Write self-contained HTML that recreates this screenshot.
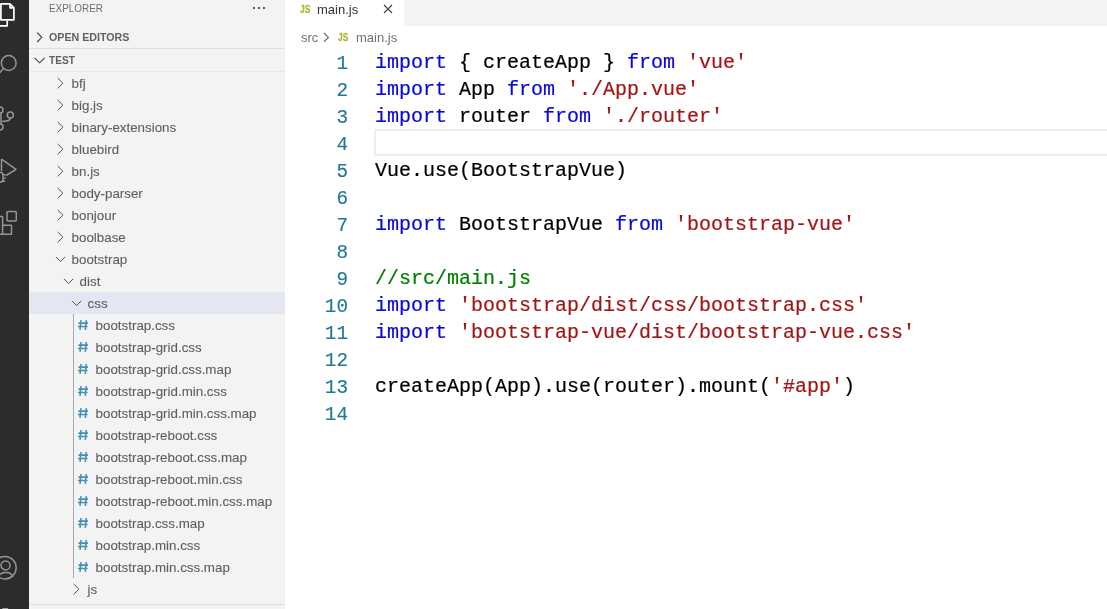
<!DOCTYPE html>
<html><head><meta charset="utf-8">
<style>
*{margin:0;padding:0;box-sizing:border-box}
html,body{width:1107px;height:609px;overflow:hidden;background:#fff;font-family:"Liberation Sans",sans-serif;-webkit-font-smoothing:antialiased}
#act{position:absolute;left:0;top:0;width:29px;height:609px;background:#2c2c2c;overflow:hidden}
#side{will-change:transform;position:absolute;left:29px;top:0;width:256px;height:609px;background:#f3f3f3;overflow:hidden;color:#616161;font-size:13px}
#editor{will-change:transform;position:absolute;left:285px;top:0;width:822px;height:609px;background:#fff;overflow:hidden}
.hdr{position:absolute;left:20px;top:0;height:17px;font-size:11px;line-height:17px;color:#6f6f6f}
.dots{position:absolute;left:224px;top:7px}
.dots i{position:absolute;top:0;width:2px;height:2px;background:#5c5c5c}
.sec{position:absolute;left:0;width:256px;height:22px;font-size:11px;font-weight:bold;line-height:22px;color:#616161}
.sec span{position:absolute;left:20px}
.row{position:absolute;left:0;width:256px;height:22px;line-height:22px;font-size:13.35px;color:#616161;white-space:nowrap}
.row.sel{background:#e4e6f1}
.row .t{position:absolute;top:1px;-webkit-text-stroke:0.1px #5d5d64;color:#5d5d64}
svg.ch{position:absolute}
.hash{position:absolute;top:0;color:#519aba;font-weight:bold;font-size:13px}
#tabs{position:absolute;left:0;top:0;width:822px;height:26px;background:#f3f3f3}
#tab{position:absolute;left:0;top:0;width:119px;height:26px;background:#fff}
#code{position:absolute;left:0;top:49px;font-family:"Liberation Mono",monospace;font-size:20px}
.ln{position:absolute;left:0;width:63px;text-align:right;height:27px;line-height:27px;color:#237893;-webkit-text-stroke:0.15px;font-size:21px;transform:scaleX(0.92);transform-origin:right center;margin-top:0.5px}
.cl{position:absolute;left:90px;height:27px;line-height:27px;white-space:pre;color:#000;-webkit-text-stroke:0.2px}
.k{color:#0808d8}.s{color:#a31515}.c{color:#008000}
#cur{position:absolute;left:89px;top:80px;width:740px;height:27px;border:2px solid #eeeeee;border-right:none}
</style></head><body>
<div id="act"><svg width="29" height="609" style="position:absolute;left:0;top:0" fill="none" stroke-linejoin="round">
  <g stroke="#ffffff" stroke-width="1.7">
    <path d="M0.9 3.9H10L13.9 7.8V19.8H0.9Z"/>
    <path d="M10 3.9V7.8H13.9"/>
    <path d="M7.2 20.7V25.8H-6"/>
  </g>
  <g stroke="#959595" stroke-width="1.5">
    <circle cx="8.7" cy="63" r="7.4"/>
    <path d="M3.5 68.5L-2 74.5"/>
    <circle cx="10.3" cy="115" r="3"/>
    <circle cx="0" cy="110" r="3"/>
    <circle cx="0" cy="127" r="3"/>
    <path d="M1 113V124"/>
    <path d="M10.3 118C10.3 121 7 121 2 121.5"/>
    <path d="M1.5 159.2L16 169.3L6 175.5"/>
    <path d="M1.5 159.2V171"/>
    <rect x="-3" y="172.3" width="6" height="10" rx="3"/>
    <path d="M3 174.8H5.5M3.3 178H5.7M3 181.2H5.2"/>
    <rect x="7" y="211.6" width="9.3" height="9.3" rx="1"/>
    <path d="M-6 216.6H2.6V234.3H-6"/>
    <path d="M2.6 225.3H11.5V234.3H2.6"/>
    <circle cx="5" cy="567.7" r="11.2"/>
    <circle cx="5.5" cy="565.4" r="4.5"/>
    <path d="M-3 578.5C-1 571.5 10.5 570 13 577"/>
  </g>
  <rect x="2.3" y="608" width="5.8" height="1" fill="#a0a0a0"/>
</svg></div>
<div id="side">
  <div class="hdr" style="transform:scaleX(0.9);transform-origin:0 0">EXPLORER</div>
  <div class="sec" style="top:26px"><svg class="ch" style="left:2px;top:3px" width="16" height="16" viewBox="0 0 16 16"><path d="M6.2 3.6L10.8 8.3L6.2 13" stroke="#424242" stroke-width="1.1" fill="none"/></svg><span style="transform:scaleX(0.97);transform-origin:0 0">OPEN EDITORS</span></div>
  <div style="position:absolute;left:0;top:48px;width:256px;height:1px;background:#e0e0e0"></div>
  <div class="sec" style="top:49px"><svg class="ch" style="left:2px;top:3px" width="16" height="16" viewBox="0 0 16 16"><path d="M3.6 5.9L8.6 10.8L13.6 5.9" stroke="#424242" stroke-width="1.1" fill="none"/></svg><span style="transform:scaleX(0.92);transform-origin:0 0">TEST</span></div>
  <div class="row" style="top:72px"><svg class="ch" style="left:22.6px;top:3px" width="16" height="16" viewBox="0 0 16 16"><path d="M5.7 3L10.9 8.2L5.7 13.4" stroke="#505050" stroke-width="1" fill="none"/></svg><span class="t" style="left:42.6px">bfj</span></div>
<div class="row" style="top:94px"><svg class="ch" style="left:22.6px;top:3px" width="16" height="16" viewBox="0 0 16 16"><path d="M5.7 3L10.9 8.2L5.7 13.4" stroke="#505050" stroke-width="1" fill="none"/></svg><span class="t" style="left:42.6px">big.js</span></div>
<div class="row" style="top:116px"><svg class="ch" style="left:22.6px;top:3px" width="16" height="16" viewBox="0 0 16 16"><path d="M5.7 3L10.9 8.2L5.7 13.4" stroke="#505050" stroke-width="1" fill="none"/></svg><span class="t" style="left:42.6px">binary-extensions</span></div>
<div class="row" style="top:138px"><svg class="ch" style="left:22.6px;top:3px" width="16" height="16" viewBox="0 0 16 16"><path d="M5.7 3L10.9 8.2L5.7 13.4" stroke="#505050" stroke-width="1" fill="none"/></svg><span class="t" style="left:42.6px">bluebird</span></div>
<div class="row" style="top:160px"><svg class="ch" style="left:22.6px;top:3px" width="16" height="16" viewBox="0 0 16 16"><path d="M5.7 3L10.9 8.2L5.7 13.4" stroke="#505050" stroke-width="1" fill="none"/></svg><span class="t" style="left:42.6px">bn.js</span></div>
<div class="row" style="top:182px"><svg class="ch" style="left:22.6px;top:3px" width="16" height="16" viewBox="0 0 16 16"><path d="M5.7 3L10.9 8.2L5.7 13.4" stroke="#505050" stroke-width="1" fill="none"/></svg><span class="t" style="left:42.6px">body-parser</span></div>
<div class="row" style="top:204px"><svg class="ch" style="left:22.6px;top:3px" width="16" height="16" viewBox="0 0 16 16"><path d="M5.7 3L10.9 8.2L5.7 13.4" stroke="#505050" stroke-width="1" fill="none"/></svg><span class="t" style="left:42.6px">bonjour</span></div>
<div class="row" style="top:226px"><svg class="ch" style="left:22.6px;top:3px" width="16" height="16" viewBox="0 0 16 16"><path d="M5.7 3L10.9 8.2L5.7 13.4" stroke="#505050" stroke-width="1" fill="none"/></svg><span class="t" style="left:42.6px">boolbase</span></div>
<div class="row" style="top:248px"><svg class="ch" style="left:22.6px;top:3px" width="16" height="16" viewBox="0 0 16 16"><path d="M4 5.9L8.6 10.5L13.2 5.9" stroke="#505050" stroke-width="1" fill="none"/></svg><span class="t" style="left:42.6px">bootstrap</span></div>
<div class="row" style="top:270px"><svg class="ch" style="left:30.6px;top:3px" width="16" height="16" viewBox="0 0 16 16"><path d="M4 5.9L8.6 10.5L13.2 5.9" stroke="#505050" stroke-width="1" fill="none"/></svg><span class="t" style="left:50.6px">dist</span></div>
<div class="row sel" style="top:292px"><svg class="ch" style="left:38.6px;top:3px" width="16" height="16" viewBox="0 0 16 16"><path d="M4 5.9L8.6 10.5L13.2 5.9" stroke="#505050" stroke-width="1" fill="none"/></svg><span class="t" style="left:58.6px">css</span></div>
<div class="row" style="top:314px"><svg class="ch" style="left:49.0px;top:5px" width="12" height="12" viewBox="0 0 12 12"><g stroke="#4590b8" stroke-width="1.6" fill="none"><path d="M3 1.2L2 10.9M8.3 1.2L7.3 10.9M0.4 4.1H10M0 7.5H9.5"/></g></svg><span class="t" style="left:66.6px">bootstrap.css</span></div>
<div class="row" style="top:336px"><svg class="ch" style="left:49.0px;top:5px" width="12" height="12" viewBox="0 0 12 12"><g stroke="#4590b8" stroke-width="1.6" fill="none"><path d="M3 1.2L2 10.9M8.3 1.2L7.3 10.9M0.4 4.1H10M0 7.5H9.5"/></g></svg><span class="t" style="left:66.6px">bootstrap-grid.css</span></div>
<div class="row" style="top:358px"><svg class="ch" style="left:49.0px;top:5px" width="12" height="12" viewBox="0 0 12 12"><g stroke="#4590b8" stroke-width="1.6" fill="none"><path d="M3 1.2L2 10.9M8.3 1.2L7.3 10.9M0.4 4.1H10M0 7.5H9.5"/></g></svg><span class="t" style="left:66.6px">bootstrap-grid.css.map</span></div>
<div class="row" style="top:380px"><svg class="ch" style="left:49.0px;top:5px" width="12" height="12" viewBox="0 0 12 12"><g stroke="#4590b8" stroke-width="1.6" fill="none"><path d="M3 1.2L2 10.9M8.3 1.2L7.3 10.9M0.4 4.1H10M0 7.5H9.5"/></g></svg><span class="t" style="left:66.6px">bootstrap-grid.min.css</span></div>
<div class="row" style="top:402px"><svg class="ch" style="left:49.0px;top:5px" width="12" height="12" viewBox="0 0 12 12"><g stroke="#4590b8" stroke-width="1.6" fill="none"><path d="M3 1.2L2 10.9M8.3 1.2L7.3 10.9M0.4 4.1H10M0 7.5H9.5"/></g></svg><span class="t" style="left:66.6px">bootstrap-grid.min.css.map</span></div>
<div class="row" style="top:424px"><svg class="ch" style="left:49.0px;top:5px" width="12" height="12" viewBox="0 0 12 12"><g stroke="#4590b8" stroke-width="1.6" fill="none"><path d="M3 1.2L2 10.9M8.3 1.2L7.3 10.9M0.4 4.1H10M0 7.5H9.5"/></g></svg><span class="t" style="left:66.6px">bootstrap-reboot.css</span></div>
<div class="row" style="top:446px"><svg class="ch" style="left:49.0px;top:5px" width="12" height="12" viewBox="0 0 12 12"><g stroke="#4590b8" stroke-width="1.6" fill="none"><path d="M3 1.2L2 10.9M8.3 1.2L7.3 10.9M0.4 4.1H10M0 7.5H9.5"/></g></svg><span class="t" style="left:66.6px">bootstrap-reboot.css.map</span></div>
<div class="row" style="top:468px"><svg class="ch" style="left:49.0px;top:5px" width="12" height="12" viewBox="0 0 12 12"><g stroke="#4590b8" stroke-width="1.6" fill="none"><path d="M3 1.2L2 10.9M8.3 1.2L7.3 10.9M0.4 4.1H10M0 7.5H9.5"/></g></svg><span class="t" style="left:66.6px">bootstrap-reboot.min.css</span></div>
<div class="row" style="top:490px"><svg class="ch" style="left:49.0px;top:5px" width="12" height="12" viewBox="0 0 12 12"><g stroke="#4590b8" stroke-width="1.6" fill="none"><path d="M3 1.2L2 10.9M8.3 1.2L7.3 10.9M0.4 4.1H10M0 7.5H9.5"/></g></svg><span class="t" style="left:66.6px">bootstrap-reboot.min.css.map</span></div>
<div class="row" style="top:512px"><svg class="ch" style="left:49.0px;top:5px" width="12" height="12" viewBox="0 0 12 12"><g stroke="#4590b8" stroke-width="1.6" fill="none"><path d="M3 1.2L2 10.9M8.3 1.2L7.3 10.9M0.4 4.1H10M0 7.5H9.5"/></g></svg><span class="t" style="left:66.6px">bootstrap.css.map</span></div>
<div class="row" style="top:534px"><svg class="ch" style="left:49.0px;top:5px" width="12" height="12" viewBox="0 0 12 12"><g stroke="#4590b8" stroke-width="1.6" fill="none"><path d="M3 1.2L2 10.9M8.3 1.2L7.3 10.9M0.4 4.1H10M0 7.5H9.5"/></g></svg><span class="t" style="left:66.6px">bootstrap.min.css</span></div>
<div class="row" style="top:556px"><svg class="ch" style="left:49.0px;top:5px" width="12" height="12" viewBox="0 0 12 12"><g stroke="#4590b8" stroke-width="1.6" fill="none"><path d="M3 1.2L2 10.9M8.3 1.2L7.3 10.9M0.4 4.1H10M0 7.5H9.5"/></g></svg><span class="t" style="left:66.6px">bootstrap.min.css.map</span></div>
<div class="row" style="top:578px"><svg class="ch" style="left:38.6px;top:3px" width="16" height="16" viewBox="0 0 16 16"><path d="M5.7 3L10.9 8.2L5.7 13.4" stroke="#505050" stroke-width="1" fill="none"/></svg><span class="t" style="left:58.6px">js</span></div>
  <div style="position:absolute;left:0;top:71px;width:256px;height:1px;background:#e8e8e8"></div>
  <div style="position:absolute;left:44px;top:314px;width:1px;height:264px;background:#aaaaaa"></div>
  <div style="position:absolute;left:0;top:604px;width:256px;height:1px;background:#dcdcdc"></div>
  <div class="dots"><i style="left:0"></i><i style="left:5px"></i><i style="left:10px"></i></div>
</div>
<div id="editor">
  <div id="tabs"><div id="tab">
    <span style="position:absolute;left:14.5px;top:0;line-height:19px;font-size:10px;font-weight:bold;color:#b3b83f;-webkit-text-stroke:0.3px;transform:scaleX(0.84);transform-origin:0 0">JS</span>
    <span style="position:absolute;left:32px;top:-0.5px;line-height:19px;font-size:13px;color:#333333">main.js</span>
    <svg style="position:absolute;left:98px;top:4px" width="10" height="10" viewBox="0 0 10 10"><path d="M1 1L9 9M9 1L1 9" stroke="#424242" stroke-width="1.1"/></svg>
  </div></div>
  <div id="bc" style="position:absolute;left:0;top:26px;height:23px;width:822px;font-size:13px;color:#717171;line-height:23px">
    <span style="position:absolute;left:16px">src</span>
    <svg style="position:absolute;left:37px;top:6px" width="8" height="11" viewBox="0 0 8 11"><path d="M2 1L6.4 5.4L2 9.8" stroke="#5f5f5f" stroke-width="1.1" fill="none"/></svg>
    <span style="position:absolute;left:53px;top:1px;font-size:10px;font-weight:bold;color:#b3b83f;-webkit-text-stroke:0.3px;transform:scaleX(0.84);transform-origin:0 0;line-height:21px">JS</span>
    <span style="position:absolute;left:71px">main.js</span>
  </div>
  <div id="code">
    <div id="cur"></div>
    <div class="ln" style="top:0px">1</div><div class="cl" style="top:0px"><span class="k">import</span> { createApp } <span class="k">from</span> <span class="s">'vue'</span></div>
<div class="ln" style="top:27px">2</div><div class="cl" style="top:27px"><span class="k">import</span> App <span class="k">from</span> <span class="s">'./App.vue'</span></div>
<div class="ln" style="top:54px">3</div><div class="cl" style="top:54px"><span class="k">import</span> router <span class="k">from</span> <span class="s">'./router'</span></div>
<div class="ln" style="top:81px">4</div><div class="cl" style="top:81px"></div>
<div class="ln" style="top:108px">5</div><div class="cl" style="top:108px">Vue.use(BootstrapVue)</div>
<div class="ln" style="top:135px">6</div><div class="cl" style="top:135px"></div>
<div class="ln" style="top:162px">7</div><div class="cl" style="top:162px"><span class="k">import</span> BootstrapVue <span class="k">from</span> <span class="s">'bootstrap-vue'</span></div>
<div class="ln" style="top:189px">8</div><div class="cl" style="top:189px"></div>
<div class="ln" style="top:216px">9</div><div class="cl" style="top:216px"><span class="c">//src/main.js</span></div>
<div class="ln" style="top:243px">10</div><div class="cl" style="top:243px"><span class="k">import</span> <span class="s">'bootstrap/dist/css/bootstrap.css'</span></div>
<div class="ln" style="top:270px">11</div><div class="cl" style="top:270px"><span class="k">import</span> <span class="s">'bootstrap-vue/dist/bootstrap-vue.css'</span></div>
<div class="ln" style="top:297px">12</div><div class="cl" style="top:297px"></div>
<div class="ln" style="top:324px">13</div><div class="cl" style="top:324px">createApp(App).use(router).mount(<span class="s">'#app'</span>)</div>
<div class="ln" style="top:351px">14</div><div class="cl" style="top:351px"></div>
  </div>
</div>
</body></html>
